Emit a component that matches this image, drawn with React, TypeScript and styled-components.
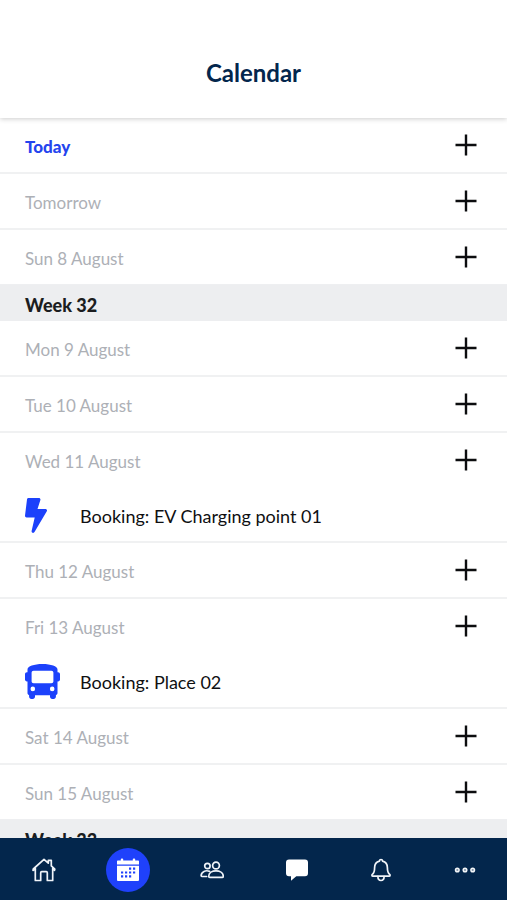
import React from 'react';
import styled, { createGlobalStyle } from 'styled-components';

const GlobalStyle = createGlobalStyle`
  *, *::before, *::after { box-sizing: border-box; }
  body {
    margin: 0;
    background: #ffffff;
    color: #16181c;
    font-family: Lato, "Liberation Sans", sans-serif;
    font-size: 17px;
    line-height: 24px;
  }
`;

const Screen = styled.div`
  display: flex;
  flex-direction: column;
  height: 100vh;
  overflow: hidden;
`;

const Header = styled.header`
  position: relative;
  z-index: 1;
  flex: none;
  padding: 59px 24px 31px;
  background: #ffffff;
  box-shadow: 0 1px 5px rgba(0, 0, 0, 0.2);
  text-align: center;
`;

const Title = styled.h1`
  margin: 0;
  color: #03264c;
  font-size: 24px;
  font-weight: 700;
  line-height: 28px;
`;

const Agenda = styled.main`
  flex: 1;
  min-height: 0;
  overflow-y: auto;
  scrollbar-width: none;
`;

const Days = styled.ul`
  margin: 0;
  padding: 0;
  list-style: none;
`;

const Day = styled.li`
  border-bottom: 2px solid #f0f1f2;

  &:last-child {
    border-bottom: 1px solid #eeeff1;
  }
`;

const DayRow = styled.div`
  display: flex;
  align-items: center;
  justify-content: space-between;
  height: 54px;
  padding: 0 26px 0 25px;
`;

const DayName = styled.span<{ $today?: boolean }>`
  padding-top: 4px;
  color: ${({ $today }) => ($today ? '#2444ee' : '#adb0b6')};
  font-weight: ${({ $today }) => ($today ? 900 : 400)};
`;

const AddButton = styled.button`
  display: flex;
  padding: 4px;
  border: 0;
  background: none;
  color: #0c0d0f;
  cursor: pointer;
`;

const Booking = styled.div`
  display: flex;
  align-items: center;
  height: 54px;
  padding: 3px 25px 0;
  color: #0f1012;
  font-size: 18px;
`;

const BookingIcon = styled.span`
  display: flex;
  width: 55px;
  color: #1c41fb;
`;

const WeekHeading = styled.h2`
  margin: 0;
  padding: 8px 25px 4px;
  background: #edeef0;
  color: #1b1d20;
  font-size: 18px;
  font-weight: 900;
  line-height: 24px;
`;

const TabBar = styled.nav`
  display: grid;
  grid-template-columns: repeat(6, 1fr);
  flex: none;
  height: 62px;
  padding: 1px 0 0 2px;
  background: #03264c;
`;

const Tab = styled.a`
  display: flex;
  align-items: center;
  justify-content: center;
  color: #ffffff;
`;

const TabDisc = styled.span<{ $active?: boolean }>`
  display: flex;
  align-items: center;
  justify-content: center;
  width: 44px;
  height: 44px;
  border-radius: 50%;
  background: ${({ $active }) => ($active ? '#1f41fb' : 'transparent')};
`;

const PlusIcon = () => (
  <svg width="22" height="22" viewBox="0 0 22 22" fill="none" stroke="currentColor" strokeWidth="2.4" aria-hidden="true">
    <path d="M11 .5v21M.5 11h21" />
  </svg>
);

const BoltIcon = () => (
  <svg width="22" height="35" viewBox="0 0 22 35" fill="currentColor" aria-hidden="true">
    <path d="M3.500 0h10.400c1 0 1.800.9 1.500 1.900l-2.900 9h7.900c1.300 0 2 1.300 1.400 2.400L9.500 34.100c-.9 1.500-3.200.7-2.900-1.100L9.700 19.500H1.600C.6 19.500-.1 18.700 0 17.700L2 1.400C2.100.600 2.700 0 3.500 0z" />
  </svg>
);

const BusIcon = () => (
  <svg width="35" height="35" viewBox="0 0 35 35" fill="currentColor" aria-hidden="true">
    <path
      fillRule="evenodd"
      d="M17.500 0c8.500 0 15 2.300 15 5.500v2.700h.6c1.100 0 1.900.8 1.900 1.900v5.400c0 1.100-.8 1.900-1.900 1.900h-.6V29c0 1-.6 1.900-1.600 2.200v1.600c0 1.200-1 2.200-2.200 2.200h-1.500c-1.200 0-2.200-1-2.200-2.200v-1.500H10v1.500c0 1.200-1 2.200-2.200 2.200H6.300c-1.200 0-2.200-1-2.200-2.200v-1.600c-1-.3-1.600-1.200-1.600-2.200V17.400h-.6C.8 17.400 0 16.600 0 15.500v-5.400c0-1.100.8-1.900 1.900-1.900h.6V5.500C2.500 2.300 9 0 17.500 0zM8.600 6.800C7.400 6.800 6.600 7.600 6.600 8.800v8.500c0 1.200.8 2 2 2h17.800c1.200 0 2-.8 2-2V8.800c0-1.200-.8-2-2-2zM7.800 22.600a2.300 2.300 0 1 0 0 4.600 2.300 2.300 0 0 0 0-4.600zM27.200 22.600a2.300 2.300 0 1 0 0 4.600 2.300 2.300 0 0 0 0-4.600z"
    />
  </svg>
);

const line = { fill: 'none', stroke: '#f0f4f9', strokeWidth: 1.7, strokeLinejoin: 'round', strokeLinecap: 'round' } as const;

const HomeIcon = () => (
  <svg width="24" height="24" viewBox="0 0 24 24" {...line} aria-hidden="true">
    <path d="M3.3 11.2 1 12.4 1.3 11 12 1.3l4.3 3.9V2.3h3v5.6l3.500 3.3-.3 1.2-1.7-1.2" />
    <path d="M3.3 10.2v12.3h5.4v-7.8c0-.6.4-1 1-1h4.6c.6 0 1 .4 1 1v7.8h5.4V10.2" />
  </svg>
);

const CalendarIcon = () => (
  <svg width="24" height="24" viewBox="0 0 24 24" aria-hidden="true">
    <path fill="#fff" d="M2 2.5h2.8V1.2c0-.9 2.4-.9 2.4 0v1.3h9.6V1.2c0-.9 2.4-.9 2.4 0v1.3H22c.6 0 1 .4 1 1v3H1v-3c0-.6.4-1 1-1zM1 7.7h22v14c0 .8-.5 1.3-1.3 1.3H2.3C1.5 23 1 22.5 1 21.700z" />
    <path fill="#1f41fb" d="M13 9.5h2.200v2.200H13zM17 9.5h2.200v2.200H17zM5 13.400h2.200v2.200H5zM9 13.400h2.200v2.200H9zM13 13.400h2.200v2.200H13zM17 13.400h2.200v2.200H17zM5 17.300h2.200v2.200H5zM9 17.300h2.200v2.200H9zM13 17.300h2.200v2.200H13z" />
  </svg>
);

const PeopleIcon = () => (
  <svg width="24" height="24" viewBox="0 0 24 24" {...line} aria-hidden="true">
    <circle cx="7.4" cy="8" r="2.7" />
    <circle cx="16" cy="7.5" r="3.4" />
    <path d="M9.6 13.4c-3.800-1.700-8.300.3-8.500 4.200 0 .6.3.9.8.9h4.700" />
    <path d="M8.700 18.200c.3-7 14.300-7 14.600 0 0 .8-.4 1.200-1.100 1.200H9.800c-.7 0-1.100-.4-1.100-1.200z" />
  </svg>
);

const ChatIcon = () => (
  <svg width="24" height="24" viewBox="0 0 24 24" fill="#fff" aria-hidden="true">
    <path d="M4 1.500h16c2 0 3 1 3 3v10.700c0 2-1 3-3 3h-8.700L6 22.700v-4.500H4c-2 0-3-1-3-3V4.500c0-2 1-3 3-3z" />
  </svg>
);

const BellIcon = () => (
  <svg width="24" height="24" viewBox="0 0 24 24" {...line} aria-hidden="true">
    <path d="M12 1.500c.9 0 1.500.7 1.600 1.600 3 .8 4.800 3.300 4.800 6.600 0 4 .6 5.500 2.300 6.700.6.5.5 1.800-.5 1.800H3.800c-1 0-1.100-1.300-.5-1.800 1.700-1.200 2.300-2.700 2.300-6.700 0-3.300 1.800-5.800 4.800-6.600.1-.9.7-1.600 1.600-1.600z" />
    <path d="M8.900 18.500c0 5.300 6.200 5.300 6.200 0" />
  </svg>
);

const MoreIcon = () => (
  <svg width="24" height="24" viewBox="0 0 24 24" fill="#8193a8" stroke="#f2f5f8" strokeWidth="1.5" aria-hidden="true">
    <circle cx="4.300" cy="12" r="1.800" />
    <circle cx="12" cy="12" r="1.800" />
    <circle cx="19.700" cy="12" r="1.800" />
  </svg>
);

interface Entry {
  name: string;
  today?: boolean;
  booking?: { title: string; kind: 'charger' | 'bus' };
}

const weeks: { heading?: string; days: Entry[] }[] = [
  { days: [{ name: 'Today', today: true }, { name: 'Tomorrow' }, { name: 'Sun 8 August' }] },
  {
    heading: 'Week 32',
    days: [
      { name: 'Mon 9 August' },
      { name: 'Tue 10 August' },
      { name: 'Wed 11 August', booking: { title: 'Booking: EV Charging point 01', kind: 'charger' } },
      { name: 'Thu 12 August' },
      { name: 'Fri 13 August', booking: { title: 'Booking: Place 02', kind: 'bus' } },
      { name: 'Sat 14 August' },
      { name: 'Sun 15 August' },
    ],
  },
  { heading: 'Week 33', days: [] },
];

const tabs = [
  { label: 'Home', Icon: HomeIcon },
  { label: 'Calendar', Icon: CalendarIcon, active: true },
  { label: 'People', Icon: PeopleIcon },
  { label: 'Messages', Icon: ChatIcon },
  { label: 'Notifications', Icon: BellIcon },
  { label: 'More', Icon: MoreIcon },
];

export default function App() {
  return (
    <Screen>
      <GlobalStyle />
      <Header>
        <Title>Calendar</Title>
      </Header>
      <Agenda>
        {weeks.map((week, i) => (
          <section key={i}>
            {week.heading && <WeekHeading>{week.heading}</WeekHeading>}
            <Days>
              {week.days.map((day) => (
                <Day key={day.name}>
                  <DayRow>
                    <DayName $today={day.today}>{day.name}</DayName>
                    <AddButton type="button" aria-label={`Add booking, ${day.name}`}>
                      <PlusIcon />
                    </AddButton>
                  </DayRow>
                  {day.booking && (
                    <Booking>
                      <BookingIcon>
                        {day.booking.kind === 'charger' ? <BoltIcon /> : <BusIcon />}
                      </BookingIcon>
                      {day.booking.title}
                    </Booking>
                  )}
                </Day>
              ))}
            </Days>
          </section>
        ))}
      </Agenda>
      <TabBar aria-label="Main">
        {tabs.map(({ label, Icon, active }) => (
          <Tab key={label} href={`#${label.toLowerCase()}`} aria-label={label} aria-current={active ? 'page' : undefined}>
            <TabDisc $active={active}>
              <Icon />
            </TabDisc>
          </Tab>
        ))}
      </TabBar>
    </Screen>
  );
}
